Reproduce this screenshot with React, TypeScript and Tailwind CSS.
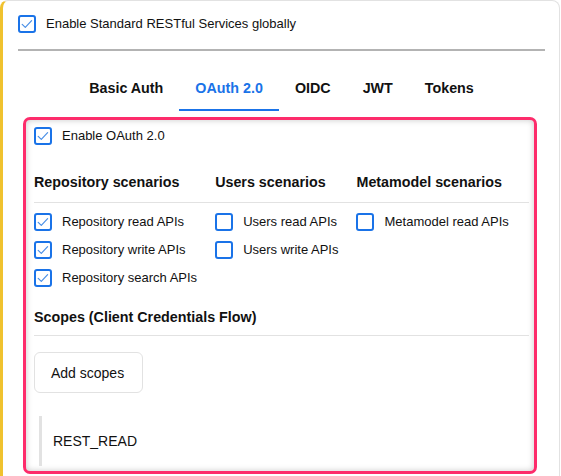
import React from "react";

function Box({ checked }: { checked?: boolean }) {
  return (
    <span className="flex h-[18px] w-[18px] shrink-0 items-center justify-center rounded-[3px] border-2 border-[#1a73e8] bg-white">
      {checked && (
        <svg width="14" height="14" viewBox="0 0 14 14" fill="none">
          <path d="M2.2 7.4 L5.3 10.4 L11.6 3.6" stroke="#4a8fe6" strokeWidth="1.2" strokeLinecap="round" strokeLinejoin="round" />
        </svg>
      )}
    </span>
  );
}

function Check({ label, checked }: { label: string; checked?: boolean }) {
  return (
    <label className="flex h-[18px] items-center whitespace-nowrap">
      <Box checked={checked} />
      <span className="ml-[10px] text-[13px] leading-4 text-[#111]">{label}</span>
    </label>
  );
}

export default function App() {
  const tabs = ["Basic Auth", "OAuth 2.0", "OIDC", "JWT", "Tokens"];
  return (
    <div className="h-[476px] w-[561px] overflow-hidden bg-white" style={{ fontFamily: '"Liberation Sans", Arial, sans-serif' }}>
      <div className="h-[520px] w-[560px] rounded-lg border border-[#e2e2e2] border-l-[3px] border-l-[#f0c22e] bg-white pl-[15px] pr-[14px]">
        <div className="mt-[14px] flex h-[18px] items-center">
          <Box checked />
          <span className="ml-[10px] text-[13px] leading-4 text-[#111]">Enable Standard RESTful Services globally</span>
        </div>
        <div className="mt-[16px] h-[2px] bg-[#b3b3b3]" />

        <div className="mt-[29px] flex justify-center">
          {tabs.map((t) => (
            <div
              key={t}
              className={
                t === "OAuth 2.0"
                  ? "border-b-2 border-[#1a73e8] px-4 pb-[13px] text-[14.3px] font-bold leading-4 text-[#1a73e8]"
                  : "border-b-2 border-transparent px-4 pb-[13px] text-[14.3px] font-bold leading-4 text-[#111]"
              }
            >
              {t}
            </div>
          ))}
        </div>

        <div className="ml-[5px] mr-[8px] mt-[6px] rounded-[7px] border-[3px] border-[#fd2c6b] bg-white pb-[5px] pl-2 pr-[5px] pt-[7px] shadow-[inset_0_0_6px_rgba(0,0,0,0.22)]">
          <Check label="Enable OAuth 2.0" checked />

          <div className="mt-[29px] grid grid-cols-[auto_auto_auto_1fr] gap-x-[18px]">
            <div className="pb-[12px] text-[14.3px] font-bold leading-4 text-[#111]">Repository scenarios</div>
            <div className="pb-[12px] text-[14.3px] font-bold leading-4 text-[#111]">Users scenarios</div>
            <div className="pb-[12px] text-[14.3px] font-bold leading-4 text-[#111]">Metamodel scenarios</div>
            <div />
            <div className="col-span-4 h-px bg-[#e2e2e2]" />
            <div className="mt-[10px] flex flex-col gap-[10px]">
              <Check label="Repository read APIs" checked />
              <Check label="Repository write APIs" checked />
              <Check label="Repository search APIs" checked />
            </div>
            <div className="mt-[10px] flex flex-col gap-[10px]">
              <Check label="Users read APIs" />
              <Check label="Users write APIs" />
            </div>
            <div className="mt-[10px] flex flex-col gap-[10px]">
              <Check label="Metamodel read APIs" />
            </div>
            <div />
          </div>

          <div className="mt-[22px] pb-[10px] text-[14.3px] font-bold leading-4 text-[#111]">Scopes (Client Credentials Flow)</div>
          <div className="h-px bg-[#e2e2e2]" />

          <button className="mt-[16px] flex h-[41px] w-[109px] items-center rounded-md border border-[#e2e2e2] bg-white pl-4 text-[14px] leading-4 text-[#111]">
            Add scopes
          </button>

          <div className="ml-[5px] mt-[23px] flex h-[50px] items-center border-l-[3px] border-[#e2e2e2] pl-[11px] text-[14px] leading-4 text-[#111]">
            REST_READ
          </div>
        </div>
      </div>
    </div>
  );
}
